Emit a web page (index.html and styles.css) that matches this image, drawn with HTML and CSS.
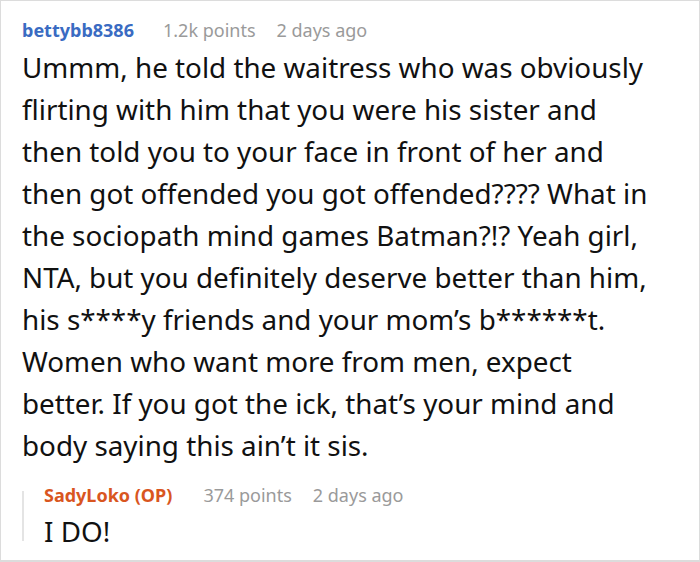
FILE: index.html
```html
<!DOCTYPE html>
<html>
<head>
<meta charset="utf-8">
<link rel="stylesheet" href="styles.css">
</head>
<body>
<div class="card">
  <div class="comment">
    <div class="meta">
      <span class="author">bettybb8386</span>
      <span class="info">1.2k points</span>
      <span class="info">2 days ago</span>
    </div>
    <p class="text">Ummm, he told the waitress who was obviously flirting with him that you were his sister and then told you to your face in front of her and then got offended you got offended???? What in the sociopath mind games Batman?!? Yeah girl, NTA, but you definitely deserve better than him, his s****y friends and your mom’s b******t. Women who want more from men, expect<br>better. If you got the ick, that’s your mind and body saying this ain’t it sis.</p>
    <div class="reply">
      <div class="meta">
        <span class="author op">SadyLoko (OP)</span>
        <span class="info">374 points</span>
        <span class="info">2 days ago</span>
      </div>
      <p class="text">I DO!</p>
    </div>
  </div>
</div>
</body>
</html>
```

FILE: styles.css
```css
html, body {
  margin: 0;
  padding: 0;
  background: #fff;
}
.card {
  box-sizing: border-box;
  width: 700px;
  height: 562px;
  border: 1px solid #dcdcdc;
  border-bottom-width: 2px;
  padding: 17px 0 0 21px;
  font-family: "Noto Sans", "Open Sans", sans-serif;
  color: #111;
}
.comment {
  width: 634px;
}
.meta {
  display: flex;
  align-items: baseline;
  font-size: 18px;
  line-height: 24px;
}
.author {
  font-weight: 700;
  color: #3a6bc2;
  margin-right: 29px;
}
.author.op {
  color: #d9561f;
  margin-right: 31px;
}
.info {
  color: #9a9a9a;
  margin-right: 21px;
}
.text {
  margin: 4px 0 0 0;
  font-size: 27.8px;
  line-height: 42px;
}
.reply {
  margin-top: 17px;
  padding-left: 22px;
  background: linear-gradient(#e4e4e4, #e4e4e4) no-repeat 0 8px / 2px 50px;
}
.reply .text {
  margin-top: 6px;
  line-height: 36px;
}
```
